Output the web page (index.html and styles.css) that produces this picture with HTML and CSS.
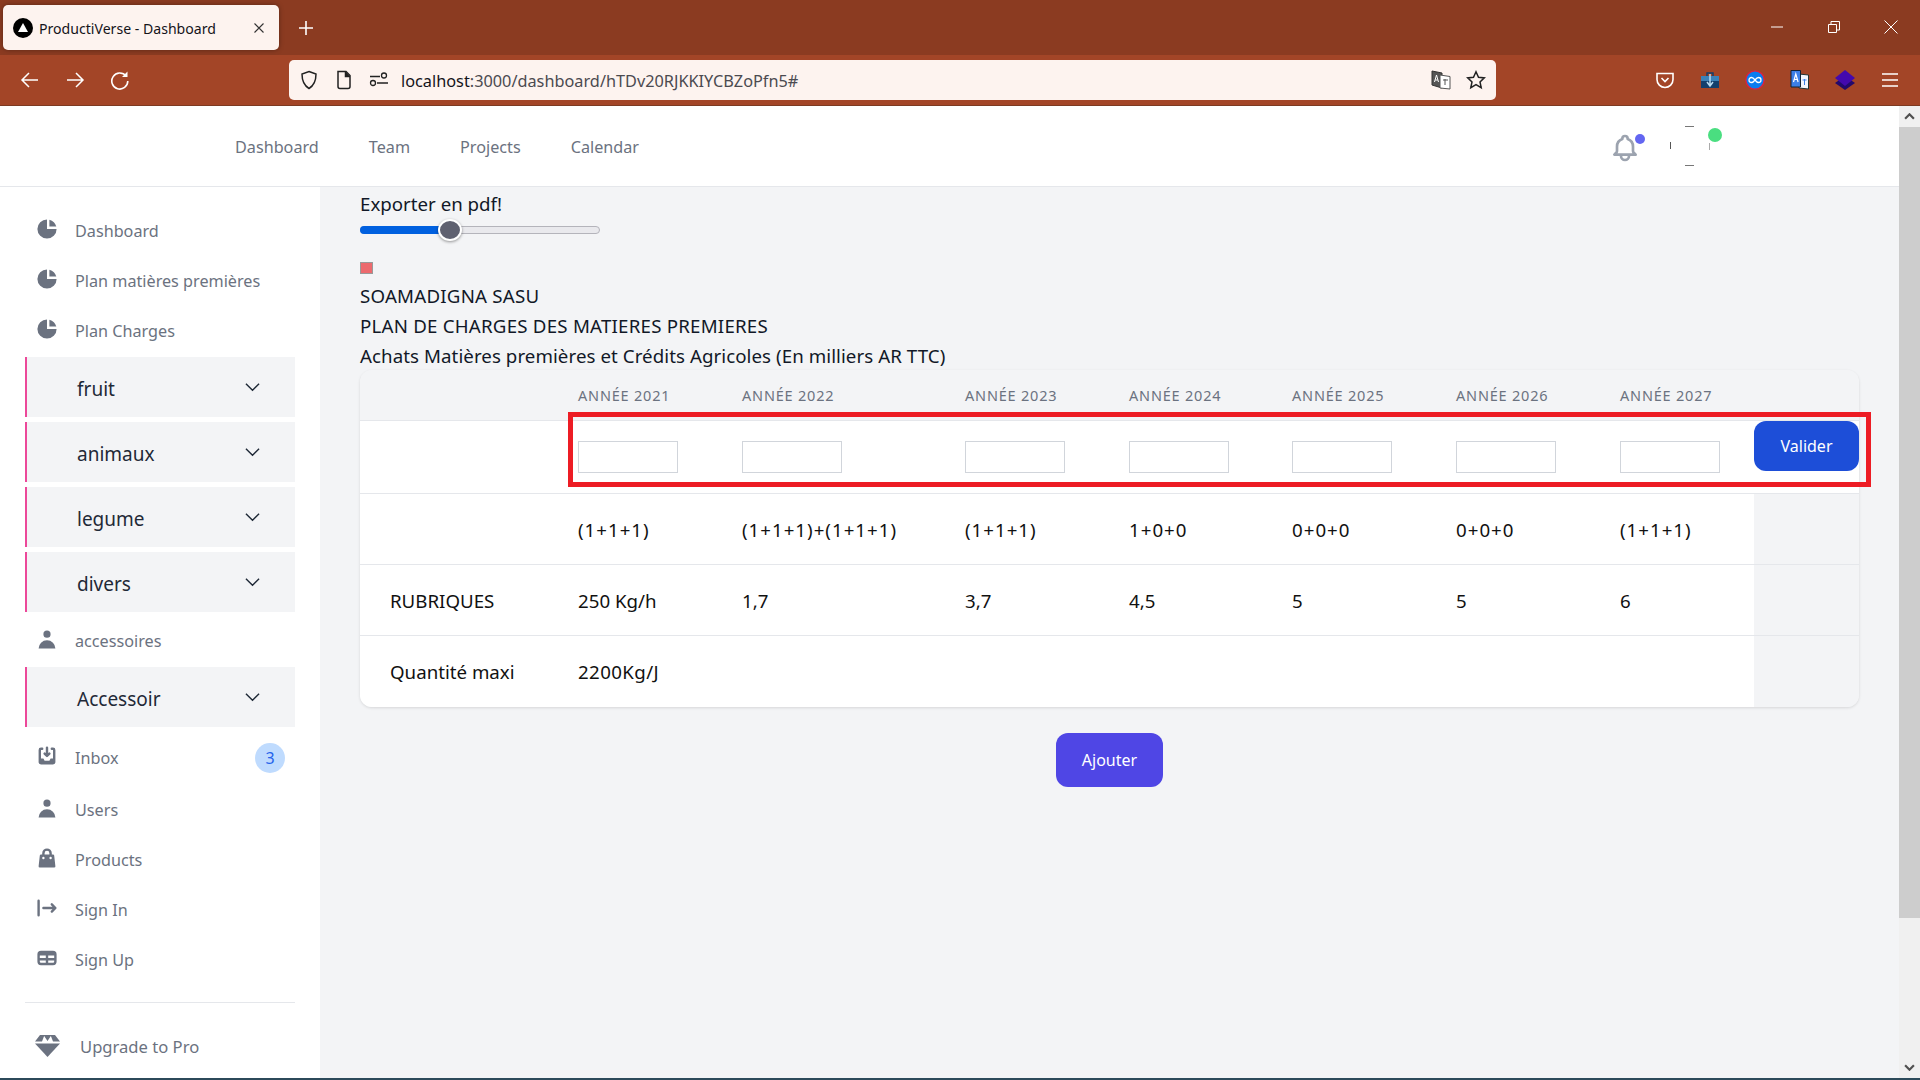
FILE: index.html
```html
<!DOCTYPE html>
<html>
	<head>
		<meta charset="UTF-8">
		<title>ProductiVerse - Dashboard</title>
		<link rel="stylesheet" href="styles.css">
	</head>
	<body>
		<!-- barre du navigateur -->
		<div class="tabbar">
			<div class="tab">
				<svg class="tabicon" viewBox="0 0 20 20"><circle cx="10" cy="10" r="10" fill="#000"/><path d="M10 5l5 9H5z" fill="#fff"/></svg>
				<span class="tabtitle">ProductiVerse - Dashboard</span>
				<svg class="tabclose" viewBox="0 0 12 12"><path d="M1.5 1.5l9 9M10.5 1.5l-9 9" stroke="#333" stroke-width="1.1"/></svg>
			</div>
			<svg class="newtab" viewBox="0 0 16 16"><path d="M8 1v14M1 8h14" stroke="#fff" stroke-width="1.6"/></svg>
			<div class="winbtns">
				<svg viewBox="0 0 14 14"><path d="M1 7h12" stroke="#fff" stroke-width="1"/></svg>
				<svg viewBox="0 0 14 14" fill="none" stroke="#fff"><path d="M1.500 4.500h8v8h-8zM4 4V1.500h8.500V10H10"/></svg>
				<svg viewBox="0 0 14 14"><path d="M0.500 0.500l13 13M13.500 0.500l-13 13" stroke="#fff" stroke-width="1"/></svg>
			</div>
		</div>
		<div class="toolbar">
			<div class="navbtns">
				<svg viewBox="0 0 20 20" fill="none" stroke="#fff" stroke-width="1.5"><path d="M18 10H2M9 3l-7 7 7 7"/></svg>
				<svg viewBox="0 0 20 20" fill="none" stroke="#fff" stroke-width="1.5"><path d="M2 10h16M11 3l7 7-7 7"/></svg>
				<svg viewBox="0 0 20 20" fill="none" stroke="#fff" stroke-width="1.6"><path d="M16 6a8 8 0 1 0 1.800 5"/><path d="M17.500 1.500v5.500h-5.500z" fill="#fff" stroke="none"/></svg>
			</div>
			<div class="urlbar">
				<svg class="urlicon" viewBox="0 0 20 20" fill="none" stroke="#222" stroke-width="1.5"><path d="M10 1.500l7 2.500c0 7-2 11.500-7 14.500-5-3-7-7.500-7-14.500z"/></svg>
				<svg class="urlicon" viewBox="0 0 20 20" fill="none" stroke="#222" stroke-width="1.5"><path d="M4 1.500h8l4 4v11a2 2 0 0 1-2 2H6a2 2 0 0 1-2-2z"/><path d="M11.500 1.500v5h4.500" fill="#222"/></svg>
				<svg class="urlicon" viewBox="0 0 20 20" fill="none" stroke="#222" stroke-width="1.3"><path d="M1 6.500h10M8 13h11"/><circle cx="15" cy="5.500" r="2.500"/><circle cx="4" cy="13" r="2.500"/></svg>
				<span class="urltext"><b>localhost</b>:3000/dashboard/hTDv20RJKKIYCBZoPfn5#</span>
				<svg class="urlicon" viewBox="0 0 20 20"><path d="M1 1l10 2v15L1 15z" fill="#555" stroke="#333"/><path d="M9 5l10 1.500V19l-10-1z" fill="#fff" stroke="#555"/><path d="M3.500 12l2-7 2 7M4.300 10h2.500" fill="none" stroke="#fff"/><path d="M12 10h5M14 9v6" stroke="#555" fill="none"/></svg>
				<svg class="urlicon star" viewBox="0 0 20 20" fill="none" stroke="#222" stroke-width="1.5"><path d="M10 1.800l2.500 5.400 5.800.7-4.300 4 1.200 5.800-5.200-3-5.200 3 1.200-5.800-4.300-4 5.800-.7z"/></svg>
			</div>
			<div class="extensions">
				<svg viewBox="0 0 20 20" fill="none" stroke="#fff" stroke-width="1.6"><path d="M2 3.500h16v6a8 8 0 0 1-16 0z"/><path d="M6.500 8l3.500 3.500L13.500 8"/></svg>
				<svg viewBox="0 0 20 20"><path d="M1 6h18v12H1z" fill="#123f6d"/><path d="M1 6h18v5H1z" fill="#3b82b8"/><path d="M7 6V3h6v3" fill="none" stroke="#123f6d" stroke-width="1.500"/><path d="M10 4v12M7 12l3 4 3-4" stroke="#b9dcf2" fill="none" stroke-width="1.500"/></svg>
				<svg viewBox="0 0 20 20"><circle cx="10" cy="10" r="9.200" fill="#0a7cf0" stroke="#e1203c" stroke-width="1.300"/><path d="M10 10c-1.500-2-2.300-2.500-3.500-2.500a2.500 2.500 0 0 0 0 5c1.200 0 2-.5 3.500-2.500s2.300-2.500 3.500-2.500a2.500 2.500 0 0 1 0 5c-1.200 0-2-.5-3.500-2.500z" fill="none" stroke="#fff" stroke-width="1.300"/></svg>
				<svg viewBox="0 0 20 20"><path d="M9 4l9.500 1v14L9 18z" fill="#f2f6fd" stroke="#233"/><path d="M1 0.500h9.500V17H1z" fill="#3c7fe6" stroke="#123"/><path d="M3.500 12l2.300-8 2.300 8M4.300 9.500h3" fill="none" stroke="#fff" stroke-width="1.200"/><path d="M12.500 10h4M14.500 9v6" stroke="#3c7fe6" fill="none"/></svg>
				<svg viewBox="0 0 20 20"><path d="M10 6L20 13l-10 7L0 13z" fill="#22096b"/><path d="M10 0l10 8-10 8L0 8z" fill="#4309ad"/></svg>
				<svg viewBox="0 0 20 20"><path d="M2 4h16M2 10h16M2 16h16" stroke="#fff" stroke-width="1.600"/></svg>
			</div>
		</div>

		<!-- en-tete de la page -->
		<div class="page">
			<div class="content">
				<header class="topnav">
					<nav class="toplinks">
						<a>Dashboard</a>
						<a>Team</a>
						<a>Projects</a>
						<a>Calendar</a>
					</nav>
					<div class="topright">
						<div class="bell">
							<svg viewBox="0 0 24 24" fill="none" stroke="#9ca3af" stroke-width="2" stroke-linecap="round" stroke-linejoin="round"><path d="M15 17h5l-1.400-1.400A2 2 0 0 1 18 14.200V11a6 6 0 0 0-4-5.700V5a2 2 0 1 0-4 0v.3A6 6 0 0 0 6 11v3.200c0 .5-.2 1-.6 1.400L4 17h5m6 0v1a3 3 0 1 1-6 0v-1m6 0H9"/></svg>
							<span class="belldot"></span>
						</div>
						<div class="avatar">
							<svg viewBox="0 0 40 40" fill="none" stroke="#555"><path d="M15 .5h9M15 39.500h9" stroke="#777"/><path d="M.5 16v7"/><path d="M39.500 17v7" stroke="#aaa"/></svg>
							<span class="avatardot"></span>
						</div>
					</div>
				</header>

				<div class="columns">
					<aside class="sidebar">
						<a class="item"><svg viewBox="0 0 20 20"><path d="M2 10a8 8 0 018-8v8h8a8 8 0 11-16 0z"/><path d="M12 2.252A8.014 8.014 0 0117.748 8H12V2.252z"/></svg>Dashboard</a>
						<a class="item"><svg viewBox="0 0 20 20"><path d="M2 10a8 8 0 018-8v8h8a8 8 0 11-16 0z"/><path d="M12 2.252A8.014 8.014 0 0117.748 8H12V2.252z"/></svg>Plan matières premières</a>
						<a class="item"><svg viewBox="0 0 20 20"><path d="M2 10a8 8 0 018-8v8h8a8 8 0 11-16 0z"/><path d="M12 2.252A8.014 8.014 0 0117.748 8H12V2.252z"/></svg>Plan Charges</a>
						<div class="group first"><span>fruit</span><svg viewBox="0 0 16 10"><path d="M1 1.500l7 7 7-7"/></svg></div>
						<div class="group"><span>animaux</span><svg viewBox="0 0 16 10"><path d="M1 1.500l7 7 7-7"/></svg></div>
						<div class="group"><span>legume</span><svg viewBox="0 0 16 10"><path d="M1 1.500l7 7 7-7"/></svg></div>
						<div class="group"><span>divers</span><svg viewBox="0 0 16 10"><path d="M1 1.500l7 7 7-7"/></svg></div>
						<a class="item acc"><svg viewBox="0 0 20 20"><path fill-rule="evenodd" d="M10 9a3 3 0 100-6 3 3 0 000 6zm-7 9a7 7 0 1114 0H3z" clip-rule="evenodd"/></svg>accessoires</a>
						<div class="group"><span>Accessoir</span><svg viewBox="0 0 16 10"><path d="M1 1.500l7 7 7-7"/></svg></div>
						<a class="item inbox"><svg viewBox="0 0 20 20"><path d="M8.707 7.293a1 1 0 00-1.414 1.414l2 2a1 1 0 001.414 0l2-2a1 1 0 00-1.414-1.414L11 7.586V3a1 1 0 10-2 0v4.586l-.293-.293z"/><path d="M3 5a2 2 0 012-2h1a1 1 0 010 2H5v7h2l1 2h4l1-2h2V5h-1a1 1 0 110-2h1a2 2 0 012 2v10a2 2 0 01-2 2H5a2 2 0 01-2-2V5z"/></svg>Inbox<span class="badge">3</span></a>
						<a class="item users"><svg viewBox="0 0 20 20"><path fill-rule="evenodd" d="M10 9a3 3 0 100-6 3 3 0 000 6zm-7 9a7 7 0 1114 0H3z" clip-rule="evenodd"/></svg>Users</a>
						<a class="item"><svg viewBox="0 0 20 20"><path fill-rule="evenodd" d="M10 2a4 4 0 00-4 4v1H5a1 1 0 00-.994.89l-1 9A1 1 0 004 18h12a1 1 0 00.994-1.11l-1-9A1 1 0 0015 7h-1V6a4 4 0 00-4-4zm2 5V6a2 2 0 10-4 0v1h4zm-6 3a1 1 0 112 0 1 1 0 01-2 0zm7-1a1 1 0 100 2 1 1 0 000-2z" clip-rule="evenodd"/></svg>Products</a>
						<a class="item"><svg viewBox="0 0 20 20"><path fill-rule="evenodd" d="M3 3a1 1 0 00-1 1v12a1 1 0 102 0V4a1 1 0 00-1-1zm10.293 9.293a1 1 0 001.414 1.414l3-3a1 1 0 000-1.414l-3-3a1 1 0 10-1.414 1.414L14.586 9H7a1 1 0 100 2h7.586l-1.293 1.293z" clip-rule="evenodd"/></svg>Sign In</a>
						<a class="item"><svg viewBox="0 0 20 20"><path fill-rule="evenodd" d="M5 4a3 3 0 00-3 3v6a3 3 0 003 3h10a3 3 0 003-3V7a3 3 0 00-3-3H5zm-1 9v-1h5v2H5a1 1 0 01-1-1zm7 1h4a1 1 0 001-1v-1h-5v2zm0-4h5V8h-5v2zM9 8H4v2h5V8z" clip-rule="evenodd"/></svg>Sign Up</a>
						<div class="sep"></div>
						<a class="item upgrade"><svg viewBox="0 0 25 23"><path d="M0 7.500L5 1h4.500L7 7.500zM18 7.500L15.500 1H20l5 6.500zM8.500 1h8l-4 6z"/><path d="M0 9.500h25L12.500 23z"/></svg>Upgrade to Pro</a>
					</aside>

					<main class="main">
						<label class="pdflabel">Exporter en pdf!</label>
						<div class="slider">
							<div class="fill"></div>
							<span class="thumb"></span>
						</div>
						<span class="brokenimg"></span>
						<p class="line caps">SOAMADIGNA SASU</p>
						<p class="line caps">PLAN DE CHARGES DES MATIERES PREMIERES</p>
						<p class="line">Achats Matières premières et Crédits Agricoles (En milliers AR TTC)</p>

						<div class="tablewrap">
							<div class="tableclip">
								<table>
									<colgroup>
										<col class="c0"><col class="c1"><col class="c2"><col class="c1"><col class="c3"><col class="c1"><col class="c1"><col class="c4"><col class="c5">
									</colgroup>
									<tr class="head">
										<th></th><th>Année 2021</th><th>Année 2022</th><th>Année 2023</th><th>Année 2024</th><th>Année 2025</th><th>Année 2026</th><th>Année 2027</th><th></th>
									</tr>
									<tr class="inputs">
										<td></td>
										<td><input type="text"></td>
										<td><input type="text"></td>
										<td><input type="text"></td>
										<td><input type="text"></td>
										<td><input type="text"></td>
										<td><input type="text"></td>
										<td><input type="text"></td>
										<td class="validcell"><button class="valider">Valider</button></td>
									</tr>
									<tr class="formula">
										<td></td><td>(1+1+1)</td><td>(1+1+1)+(1+1+1)</td><td>(1+1+1)</td><td>1+0+0</td><td>0+0+0</td><td>0+0+0</td><td>(1+1+1)</td><td class="grey"></td>
									</tr>
									<tr>
										<td class="label">RUBRIQUES</td><td>250 Kg/h</td><td>1,7</td><td>3,7</td><td>4,5</td><td>5</td><td>5</td><td>6</td><td class="grey"></td>
									</tr>
									<tr class="last">
										<td class="label">Quantité maxi</td><td class="qty">2200Kg/J</td><td></td><td></td><td></td><td></td><td></td><td></td><td class="grey"></td>
									</tr>
								</table>
							</div>
							<div class="redbox"></div>
						</div>

						<div class="addrow"><button class="ajouter">Ajouter</button></div>
					</main>
				</div>
			</div>

			<div class="scrollbar">
				<span class="sbtn"><svg viewBox="0 0 10 6"><path d="M1 5l4-4 4 4" fill="none" stroke="#505050" stroke-width="2"/></svg></span>
				<div class="sthumb"></div>
				<span class="sbtn"><svg viewBox="0 0 10 6"><path d="M1 1l4 4 4-4" fill="none" stroke="#505050" stroke-width="2"/></svg></span>
			</div>
		</div>
		<div class="taskstrip"></div>
	</body>
</html>
```

FILE: styles.css
```css
html, body {
	margin: 0;
	height: 1080px;
	overflow: hidden;
}
body {
	display: flex;
	flex-direction: column;
	font-family: "Noto Sans", "Open Sans", sans-serif;
	color: #111827;
	background: #fff;
}

/* navigateur */
.tabbar {
	height: 55px;
	background: #8b3b21;
	display: flex;
	align-items: flex-start;
	padding: 5px 0 0 3px;
	box-sizing: border-box;
	flex-shrink: 0;
}
.tab {
	width: 276px;
	height: 45px;
	box-sizing: border-box;
	background: #fdf3ef;
	border-radius: 5px;
	box-shadow: 0 0 5px rgba(0,0,0,.35);
	display: flex;
	align-items: center;
	padding: 0 14px 0 10px;
}
.tabicon {
	width: 20px;
	height: 20px;
	margin-right: 6px;
}
.tabtitle {
	flex: 1;
	font-size: 14.100px;
	padding-top: 1px;
	color: #15141a;
	white-space: nowrap;
}
.tabclose {
	width: 12px;
	height: 12px;
}
.newtab {
	width: 16px;
	height: 16px;
	margin: 15px 0 0 19px;
}
.winbtns {
	margin-left: auto;
	display: flex;
	gap: 43px;
	padding: 15px 22px 0 0;
}
.winbtns svg {
	width: 14px;
	height: 14px;
	display: block;
}
.toolbar {
	height: 51px;
	box-sizing: border-box;
	background: #a34527;
	border-bottom: 1px solid #7d3a22;
	display: flex;
	align-items: center;
	flex-shrink: 0;
}
.navbtns {
	display: flex;
	gap: 25px;
	padding-left: 20px;
	width: 289px;
	box-sizing: border-box;
}
.navbtns svg {
	width: 20px;
	height: 20px;
}
.urlbar {
	width: 1207px;
	height: 40px;
	box-sizing: border-box;
	background: #fdf3ef;
	border-radius: 5px;
	display: flex;
	align-items: center;
	padding: 0 10px 0 10px;
}
.urlicon {
	width: 20px;
	height: 20px;
	flex-shrink: 0;
	margin-right: 15px;
}
.urlicon.star {
	margin-right: 0;
}
.urltext {
	flex: 1;
	font-size: 16.300px;
	padding-top: 1px;
	color: #4b4a50;
	margin-left: -3px;
	white-space: nowrap;
}
.urltext b {
	font-weight: 400;
	color: #15141a;
}
.extensions {
	display: flex;
	gap: 25px;
	padding-left: 159px;
}
.extensions svg {
	width: 20px;
	height: 20px;
}

/* page */
.page {
	flex: 1;
	display: flex;
	min-height: 0;
}
.content {
	flex: 1;
	display: flex;
	flex-direction: column;
	min-width: 0;
}
.topnav {
	height: 81px;
	box-sizing: border-box;
	border-bottom: 1px solid #e5e7eb;
	display: flex;
	align-items: center;
	padding: 0 0 0 235px;
	flex-shrink: 0;
}
.toplinks {
	display: flex;
	gap: 50px;
	font-size: 16.200px;
	padding-top: 2px;
	color: #6b7280;
}
.topright {
	margin-left: auto;
	display: flex;
	align-items: center;
	gap: 33px;
	padding-right: 189px;
}
.bell {
	position: relative;
	width: 24px;
	height: 30px;
	margin-top: 6px;
}
.bell svg {
	width: 32px;
	height: 32px;
	margin: -2px 0 0 -4px;
	display: block;
}
.belldot {
	position: absolute;
	top: 0;
	right: -8px;
	width: 10px;
	height: 10px;
	border-radius: 50%;
	background: #6366f1;
}
.avatar {
	position: relative;
	width: 40px;
	height: 40px;
}
.avatar svg {
	display: block;
	width: 40px;
	height: 40px;
}
.avatardot {
	position: absolute;
	top: 2px;
	right: -12px;
	width: 14px;
	height: 14px;
	border-radius: 50%;
	background: #4ade80;
}
.columns {
	flex: 1;
	display: flex;
	min-height: 0;
}

/* menu de gauche */
.sidebar {
	width: 320px;
	flex-shrink: 0;
	box-sizing: border-box;
	background: #fff;
	padding: 18px 25px 0;
}
.item {
	height: 50px;
	display: flex;
	align-items: center;
	font-size: 16.200px;
	padding-top: 1px;
	box-sizing: border-box;
	color: #6b7280;
	white-space: nowrap;
}
.item svg {
	width: 24px;
	height: 24px;
	fill: #6b7280;
	margin: -3px 16px 0 10px;
	flex-shrink: 0;
}
.group {
	height: 60px;
	box-sizing: border-box;
	background: #f3f4f6;
	border-left: 2px solid #ec4899;
	display: flex;
	align-items: center;
	justify-content: space-between;
	padding: 4px 35px 0 50px;
	margin-bottom: 5px;
	font-size: 19px;
	color: #1f2937;
}
.group.first {
	margin-top: 2px;
}
.group svg {
	width: 15px;
	height: 10px;
	fill: none;
	stroke: #1f2937;
	stroke-width: 1.5;
	margin-top: -5px;
}
.item.acc {
	margin: -2px 0 2px;
}
.item.inbox {
	margin-top: 1px;
	margin-bottom: 2px;
}
.group + .item.inbox {
	margin-top: 1px;
}
.badge {
	margin-left: auto;
	margin-right: 10px;
	width: 30px;
	height: 30px;
	border-radius: 50%;
	background: #bfdbfe;
	color: #2563eb;
	font-size: 16px;
	display: flex;
	align-items: center;
	justify-content: center;
}
.sep {
	height: 1px;
	background: #e5e7eb;
	margin: 18px 0 18px;
}
.item.upgrade {
	font-size: 16.600px;
}
.upgrade svg {
	width: 25px;
	height: 23px;
	margin: -2px 20px 0 10px;
}

/* contenu */
.main {
	flex: 1;
	min-width: 0;
	background: #f3f4f6;
	padding: 4px 40px 0;
	display: flex;
	flex-direction: column;
	font-size: 18.700px;
}
.pdflabel {
	line-height: 26px;
}
.slider {
	position: relative;
	width: 240px;
	height: 8px;
	margin-top: 9px;
	box-sizing: border-box;
	background: #e9e9ed;
	border: 1px solid #b4b4bb;
	border-radius: 4px;
}
.fill {
	width: 90px;
	height: 8px;
	margin: -1px 0 0 -1px;
	background: #0060df;
	border-radius: 4px 0 0 4px;
}
.thumb {
	position: absolute;
	left: 77px;
	top: -8px;
	width: 24px;
	height: 22px;
	box-sizing: border-box;
	border-radius: 50%;
	background: #5f6170;
	border: 2px solid #fff;
	box-shadow: 0 1px 3px rgba(0,0,0,.4);
}
.brokenimg {
	display: block;
	width: 13px;
	height: 12px;
	box-sizing: border-box;
	margin: 28px 0 7px;
	background: #ec6a6e;
	border: 1px solid #999;
}
.line {
	margin: 0;
	line-height: 30px;
	letter-spacing: .07px;
	color: #111827;
	white-space: nowrap;
}
.line.caps {
	letter-spacing: .22px;
}
.tablewrap {
	position: relative;
	margin-top: -1px;
	width: 1499px;
}
.tableclip {
	border-radius: 12px;
	overflow: hidden;
	box-shadow: 0 1px 3px rgba(0,0,0,.12);
}
table {
	width: 1499px;
	table-layout: fixed;
	border-collapse: separate;
	border-spacing: 0;
}
.c0 { width: 218px; }
.c1 { width: 164px; }
.c2 { width: 223px; }
.c3 { width: 163px; }
.c4 { width: 134px; }
.c5 { width: 105px; }
th, td {
	box-sizing: border-box;
	padding: 0;
	text-align: left;
	white-space: nowrap;
	border-bottom: 1px solid #e5e7eb;
	font-weight: 400;
}
th {
	height: 51px;
	font-size: 14.500px;
	letter-spacing: .8px;
	text-transform: uppercase;
	color: #6b7280;
	background: #f3f4f6;
}
td {
	height: 71px;
	background: #fff;
	font-size: 18.700px;
	color: #111;
}
.inputs td {
	height: 73px;
}
.formula td {
	letter-spacing: 1px;
}
td.qty {
	letter-spacing: .4px;
}
.last td {
	border-bottom: 0;
}
td.grey {
	background: #f3f4f6;
}
td.label {
	padding-left: 30px;
}
input {
	display: block;
	width: 100px;
	height: 32px;
	box-sizing: border-box;
	border: 1px solid #d1d5db;
	background: #fff;
	padding: 0;
}
.validcell {
	vertical-align: top;
}
.valider {
	display: block;
	width: 105px;
	height: 50px;
	border: 0;
	border-radius: 12px;
	background: #1d4ed8;
	color: #fff;
	font: 16px "Noto Sans", sans-serif;
}
.redbox {
	position: absolute;
	left: 208px;
	top: 42px;
	width: 1303px;
	height: 75px;
	box-sizing: border-box;
	border: 5px solid #ed1c24;
	pointer-events: none;
}
.addrow {
	display: flex;
	justify-content: center;
	margin-top: 26px;
}
.ajouter {
	width: 107px;
	height: 54px;
	border: 0;
	border-radius: 12px;
	background: #4f46e5;
	color: #fff;
	font: 16px "Noto Sans", sans-serif;
}

/* barre de defilement */
.scrollbar {
	width: 21px;
	flex-shrink: 0;
	background: #f0f0f0;
	display: flex;
	flex-direction: column;
}
.sbtn {
	height: 21px;
	display: flex;
	align-items: center;
	justify-content: center;
}
.sbtn svg {
	width: 11px;
	height: 7px;
}
.sthumb {
	height: 791px;
	background: #cdcdcd;
}
.sbtn:last-child {
	margin-top: auto;
}
.taskstrip {
	height: 2px;
	background: #2c4a5a;
	flex-shrink: 0;
}
```
